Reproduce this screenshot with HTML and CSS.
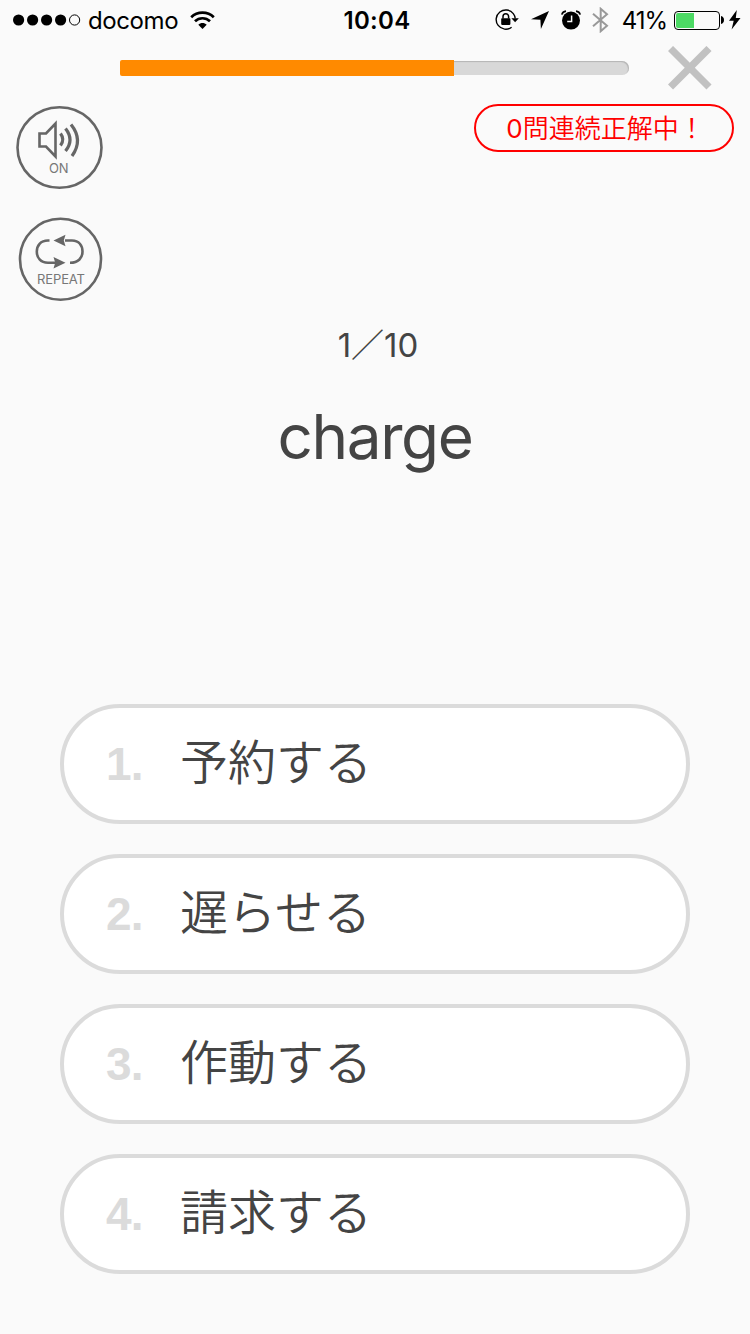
FILE: index.html
```html
<!DOCTYPE html>
<html lang="ja">
<head>
  <meta charset="UTF-8">
  <title>charge</title>
  <link rel="stylesheet" href="styles.css">
</head>
<body>

<div class="status-bar">
  <div class="status-left">
    <svg class="signal" width="68" height="12" viewBox="0 0 68 12">
      <circle cx="5.6" cy="6" r="5.6"/>
      <circle cx="19.6" cy="6" r="5.6"/>
      <circle cx="33.6" cy="6" r="5.6"/>
      <circle cx="47.6" cy="6" r="5.6"/>
      <circle cx="61.6" cy="6" r="5.1" fill="none" stroke="#000" stroke-width="1"/>
    </svg>
    <span class="carrier">docomo</span>
    <svg class="wifi" width="25" height="18" viewBox="0 0 25 18" fill="none" stroke="#000" stroke-width="2.7">
      <path d="M1.2 6.2C7.4.1 17.6.1 23.8 6.2"/>
      <path d="M5 10.3C9.2 6.2 15.800 6.2 20 10.3"/>
      <path d="M12.500 18l-4.200-4.200c2.300-2.300 6.100-2.300 8.400 0z" fill="#000" stroke="none"/>
    </svg>
  </div>
  <div class="clock">10:04</div>
  <div class="status-right">
    <svg class="lock" width="24" height="22" viewBox="0 0 24 22">
      <path d="M18.3 4.6A9.6 9.6 0 1 0 16.6 18.2M18.3 4.6Q20.2 7 20.2 9.5" fill="none" stroke="#000" stroke-width="1.4"/>
      <path d="M16.4 9.3h7.4l-3.7 4z"/>
      <rect x="6.2" y="9.3" width="9.2" height="6.6" rx=".8"/>
      <path d="M8 9.6V7.5a2.8 2.8 0 0 1 5.6 0v2.1" fill="none" stroke="#000" stroke-width="1.5"/>
    </svg>
    <svg class="arrow" width="18" height="18" viewBox="0 0 18 18"><path d="M18 0L9.9 18 9.4 8.7 0 8.2z"/></svg>
    <svg class="alarm" width="20" height="20" viewBox="0 0 20 20">
      <circle cx="10" cy="10.6" r="9"/>
      <path d="M.8 4.6Q1.5 1.6 5 1.1M19.2 4.6Q18.5 1.6 15 1.1" fill="none" stroke="#000" stroke-width="1.6"/>
      <path d="M10.6 5.4v6H6.2" fill="none" stroke="#fafafa" stroke-width="1.5"/>
    </svg>
    <svg class="bluetooth" width="17" height="26" viewBox="0 0 17 26"><path d="M1 6.7l14 12L8.7 24.2V1.8L15 7.3l-14 12" fill="none" stroke="#999" stroke-width="2"/></svg>
    <span class="percent">41%</span>
    <div class="battery"><div class="battery-level"></div></div>
    <svg class="battery-tip" width="3" height="8" viewBox="0 0 3 8"><path d="M0 0q3 .8 3 4T0 8z"/></svg>
    <svg class="bolt" width="12" height="20" viewBox="0 0 12 20"><path d="M7.8 0L0 10.8h4.7L2.6 19.5 11.5 7.9H6.8z"/></svg>
  </div>
</div>

<div class="top">
  <div class="progress"><div class="progress-fill"></div></div>
  <svg class="close" width="44" height="44" viewBox="0 0 44 44"><path d="M2.5 2.500l38.500 38.500m0-38.500l-38.500 38.500" stroke="#c1c1c1" stroke-width="7.2"/></svg>
</div>

<div class="tools">
  <div class="tool-buttons">
    <svg class="tool" width="90" height="86" viewBox="0 0 90 86">
      <ellipse cx="45.5" cy="43.5" rx="42" ry="40.3"/>
      <path d="M25.5 29.500h6.500L41.500 19.500v33L32 42.500h-6.500z"/>
      <path d="M46.500 29.500q4.500 6 0 12M51.500 24.500q9 11.500 0 22.500M57 20.500q12.500 15.500 1 31.500" stroke-width="3.2"/>
      <text x="44.800" y="69">ON</text>
    </svg>
    <svg class="tool" width="90" height="86" viewBox="0 0 90 86">
      <circle cx="46.500" cy="43.300" r="40.500"/>
      <path d="M35.500 24.500H34C26.500 24.500 22.800 29.500 22.800 35.600S26.500 46.800 34 46.800H42M51 24.500h7C65 24.500 68.500 29.500 68.500 35.600S64.500 46.800 56 46.800"/>
      <path d="M39.500 24.500l12-5.800-1.700 5.800 1.700 5.800zM51.500 46.800l-12-5.800 1.700 5.800-1.700 5.800z" fill="#666" stroke="none"/>
      <text x="47" y="67.500" textLength="48">REPEAT</text>
    </svg>
  </div>
  <div class="streak"><span class="streak-num">0</span>問連続正解中！</div>
</div>

<div class="counter">1／10</div>
<h1 class="word">charge</h1>

<ol class="options">
  <li class="option"><span class="num">1.</span>予約する</li>
  <li class="option"><span class="num">2.</span>遅らせる</li>
  <li class="option"><span class="num">3.</span>作動する</li>
  <li class="option"><span class="num">4.</span>請求する</li>
</ol>

</body>
</html>
```

FILE: styles.css
```css
* { box-sizing: border-box; }
body {
  margin: 0;
  height: 1334px;
  background: #fafafa;
  color: #444;
  font-family: Inter, "Noto Sans CJK JP", sans-serif;
  display: flex;
  flex-direction: column;
  overflow: hidden;
}
svg { display: block; flex: none; }

.status-bar {
  display: grid;
  grid-template-columns: 1fr auto 1fr;
  align-items: center;
  height: 40px;
  padding: 0 9px 0 13px;
  color: #000;
  font-size: 24px;
}
.status-left, .status-right { display: flex; align-items: center; }
.status-right { justify-content: flex-end; }
.carrier {
  margin-left: 7px;
  padding-top: 1px;
  letter-spacing: -0.4px;
}
.wifi { margin-left: 12px; }
.clock {
  padding-top: 1px;
  font-weight: 600;
  letter-spacing: 0.3px;
}
.arrow { margin-left: 12px; }
.alarm { margin-left: 12px; }
.bluetooth { margin-left: 11px; }
.percent {
  margin-left: 13px;
  padding-top: 1px;
  letter-spacing: -1px;
}
.battery {
  width: 46px;
  height: 19px;
  margin-left: 7px;
  padding: 1px;
  border: 1px solid #000;
  border-radius: 4px;
}
.battery-level {
  width: 18px;
  height: 15px;
  background: #4cd964;
  border-radius: 2px 0 0 2px;
}
.battery-tip { margin-left: 1px; }
.bolt { margin-left: 5px; }

.top {
  display: flex;
  align-items: center;
  height: 56px;
  padding: 0 38px 0 120px;
}
.progress {
  display: flex;
  align-items: center;
  width: 509px;
  height: 14px;
  border-radius: 7px;
  background: #d8d8d8;
  box-shadow: inset -1px 1px 1px #b5b5b5;
}
.progress-fill {
  width: 334px;
  height: 16px;
  background: #ff8a00;
  border-radius: 2px 0 0 2px;
}
.close { margin-left: auto; }

.tools {
  display: flex;
  justify-content: space-between;
  height: 222px;
  padding: 8px 16px 0 14px;
}
.tool-buttons {
  display: flex;
  flex-direction: column;
  gap: 26px;
}
.tool {
  fill: none;
  stroke: #666;
  stroke-width: 2.6;
}
.tool text {
  fill: #777;
  stroke: none;
  font-size: 13px;
  text-anchor: middle;
}
.streak {
  display: flex;
  align-items: center;
  justify-content: center;
  width: 260px;
  height: 48px;
  padding: 0 0 3px 3px;
  border: 2px solid #f00;
  border-radius: 24px;
  color: #f00;
  font-size: 26px;
  font-weight: 350;
}
.streak-num {
  padding-top: 3px;
  font-weight: 400;
}

.counter {
  height: 54px;
  line-height: 54px;
  padding-left: 6px;
  font-size: 33px;
  text-align: center;
}
.word {
  margin: 25px 0 0;
  height: 80px;
  line-height: 80px;
  font-size: 62px;
  font-weight: 400;
  letter-spacing: -1.4px;
  text-align: center;
}

.options {
  display: flex;
  flex-direction: column;
  gap: 30px;
  margin: auto 60px 60px;
  padding: 0;
  list-style: none;
}
.option {
  display: flex;
  align-items: center;
  height: 120px;
  padding: 0 0 10px 42px;
  border: 4px solid #dbdbdb;
  border-radius: 60px;
  background: #fff;
  font-size: 48px;
  font-weight: 350;
}
.num {
  width: 74px;
  padding-top: 10px;
  color: #dbdbdb;
  font-family: "Liberation Sans", sans-serif;
  font-size: 46px;
  font-weight: bold;
  letter-spacing: -0.8px;
}
```
